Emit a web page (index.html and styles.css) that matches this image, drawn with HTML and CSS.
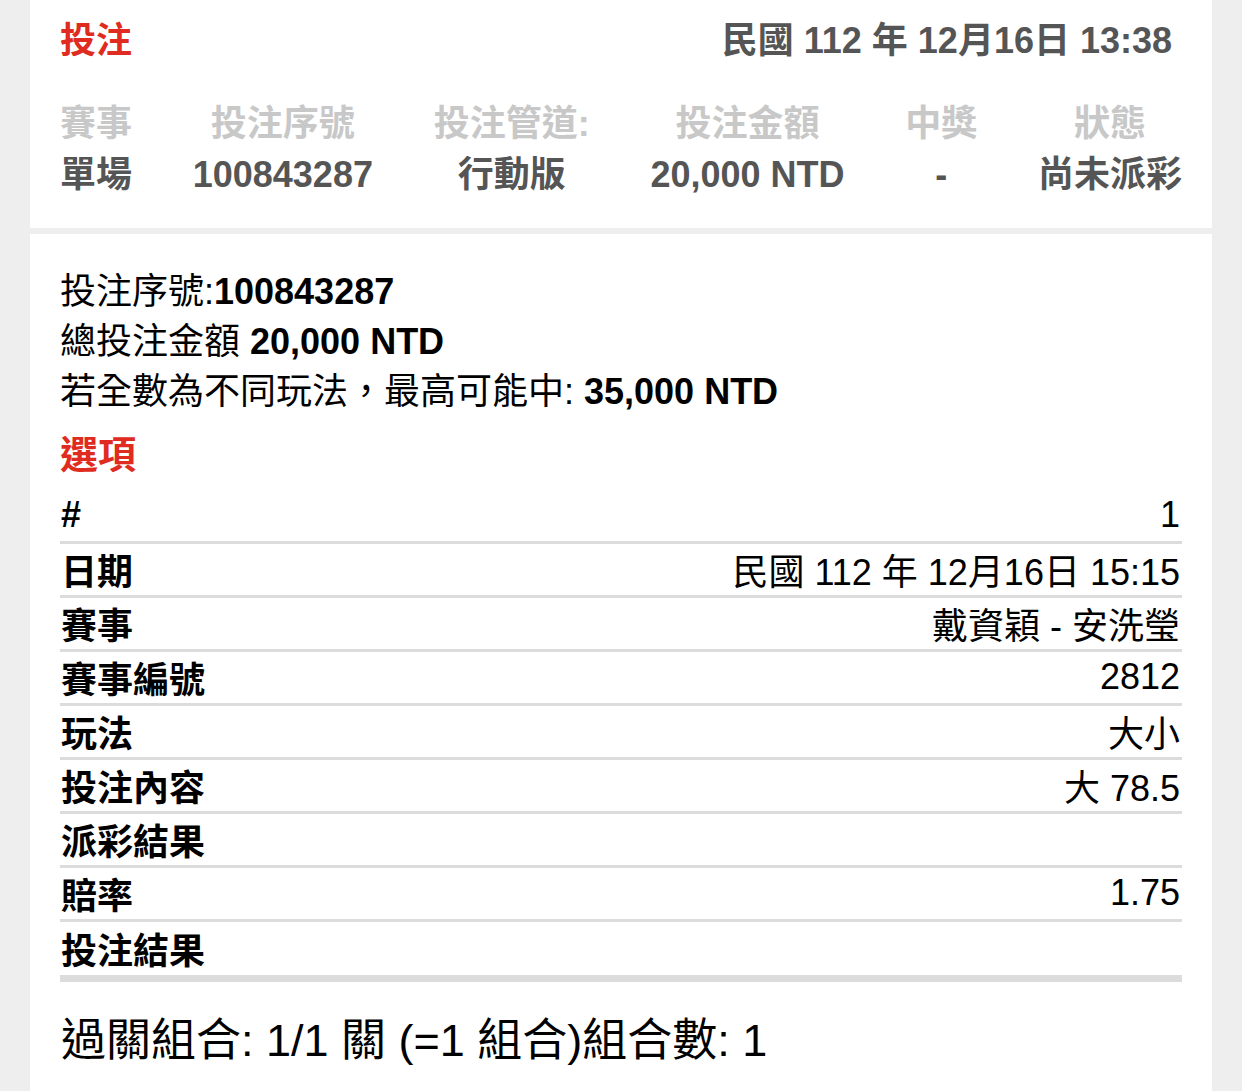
FILE: index.html
```html
<!DOCTYPE html>
<html lang="zh-Hant">
<head>
<meta charset="utf-8">
<title>投注</title>
<link rel="stylesheet" href="styles.css">
</head>
<body>
<div class="page">
  <section class="panel summary">
    <div class="title-row">
      <h1 class="title">投注</h1>
      <div class="stamp">民國 112 年 12月16日 13:38</div>
    </div>
    <div class="cols">
      <div class="col"><div class="col-label">賽事</div><div class="col-value">單場</div></div>
      <div class="col"><div class="col-label">投注序號</div><div class="col-value">100843287</div></div>
      <div class="col"><div class="col-label">投注管道:</div><div class="col-value">行動版</div></div>
      <div class="col"><div class="col-label">投注金額</div><div class="col-value">20,000 NTD</div></div>
      <div class="col"><div class="col-label">中獎</div><div class="col-value">-</div></div>
      <div class="col"><div class="col-label">狀態</div><div class="col-value">尚未派彩</div></div>
    </div>
  </section>

  <section class="panel detail">
    <p class="info">投注序號:<b>100843287</b></p>
    <p class="info">總投注金額 <b>20,000 NTD</b></p>
    <p class="info">若全數為不同玩法，最高可能中: <b>35,000 NTD</b></p>
    <h2 class="section-title">選項</h2>
    <div class="table">
      <div class="row"><span class="key">#</span><span class="val">1</span></div>
      <div class="row"><span class="key">日期</span><span class="val">民國 112 年 12月16日 15:15</span></div>
      <div class="row"><span class="key">賽事</span><span class="val">戴資穎 - 安洗瑩</span></div>
      <div class="row"><span class="key">賽事編號</span><span class="val">2812</span></div>
      <div class="row"><span class="key">玩法</span><span class="val">大小</span></div>
      <div class="row"><span class="key">投注內容</span><span class="val">大 78.5</span></div>
      <div class="row"><span class="key">派彩結果</span><span class="val"></span></div>
      <div class="row"><span class="key">賠率</span><span class="val">1.75</span></div>
      <div class="row last"><span class="key">投注結果</span><span class="val"></span></div>
    </div>
    <p class="combo">過關組合: 1/1 關 (=1 組合)組合數: 1</p>
  </section>
</div>
</body>
</html>
```

FILE: styles.css
```css
* {
  box-sizing: border-box;
}

html, body {
  margin: 0;
  padding: 0;
  background: #eeeeee;
}

body {
  font-family: "Liberation Sans", "Noto Sans CJK TC", sans-serif;
  font-size: 36px;
  color: #000;
}

.page {
  padding: 0 30px;
  display: flex;
  flex-direction: column;
  gap: 6px;
  min-height: 1091px;
}

.panel {
  background: #ffffff;
  padding: 0 30px;
}

.summary {
  padding-top: 19px;
  padding-bottom: 31px;
}

.title-row {
  display: flex;
  justify-content: space-between;
  align-items: center;
  height: 44px;
}

.title {
  margin: 0;
  font-size: 36px;
  line-height: 44px;
  font-weight: bold;
  color: #e02b20;
}

.stamp {
  font-weight: bold;
  color: #555555;
  line-height: 44px;
  padding-right: 10px;
}

.cols {
  margin-top: 39px;
  display: flex;
  justify-content: space-between;
}

.col {
  display: flex;
  flex-direction: column;
  align-items: center;
  gap: 7px;
  font-weight: bold;
  line-height: 44px;
  white-space: nowrap;
}

.col-label {
  color: #c8c8c8;
}

.col-value {
  color: #555555;
}

.detail {
  flex: 1;
  padding-top: 33px;
}

.info {
  margin: 0;
  line-height: 50px;
  white-space: nowrap;
}

.info b {
  font-weight: bold;
}

.section-title {
  margin: 13px 0 10px;
  font-size: 38px;
  line-height: 50px;
  font-weight: bold;
  color: #e02b20;
}

.table {
  display: flex;
  flex-direction: column;
}

.row {
  display: flex;
  justify-content: space-between;
  align-items: center;
  height: 54px;
  padding: 0 2px 2px 1px;
  border-bottom: 3px solid #dcdcdc;
}

.row.last {
  height: 60px;
  border-bottom-width: 7px;
}

.key {
  font-weight: bold;
}

.val {
  font-weight: normal;
  white-space: nowrap;
}

.combo {
  margin: 29px 0 0;
  font-size: 45px;
  line-height: 60px;
  padding-left: 1px;
  white-space: nowrap;
}
```
